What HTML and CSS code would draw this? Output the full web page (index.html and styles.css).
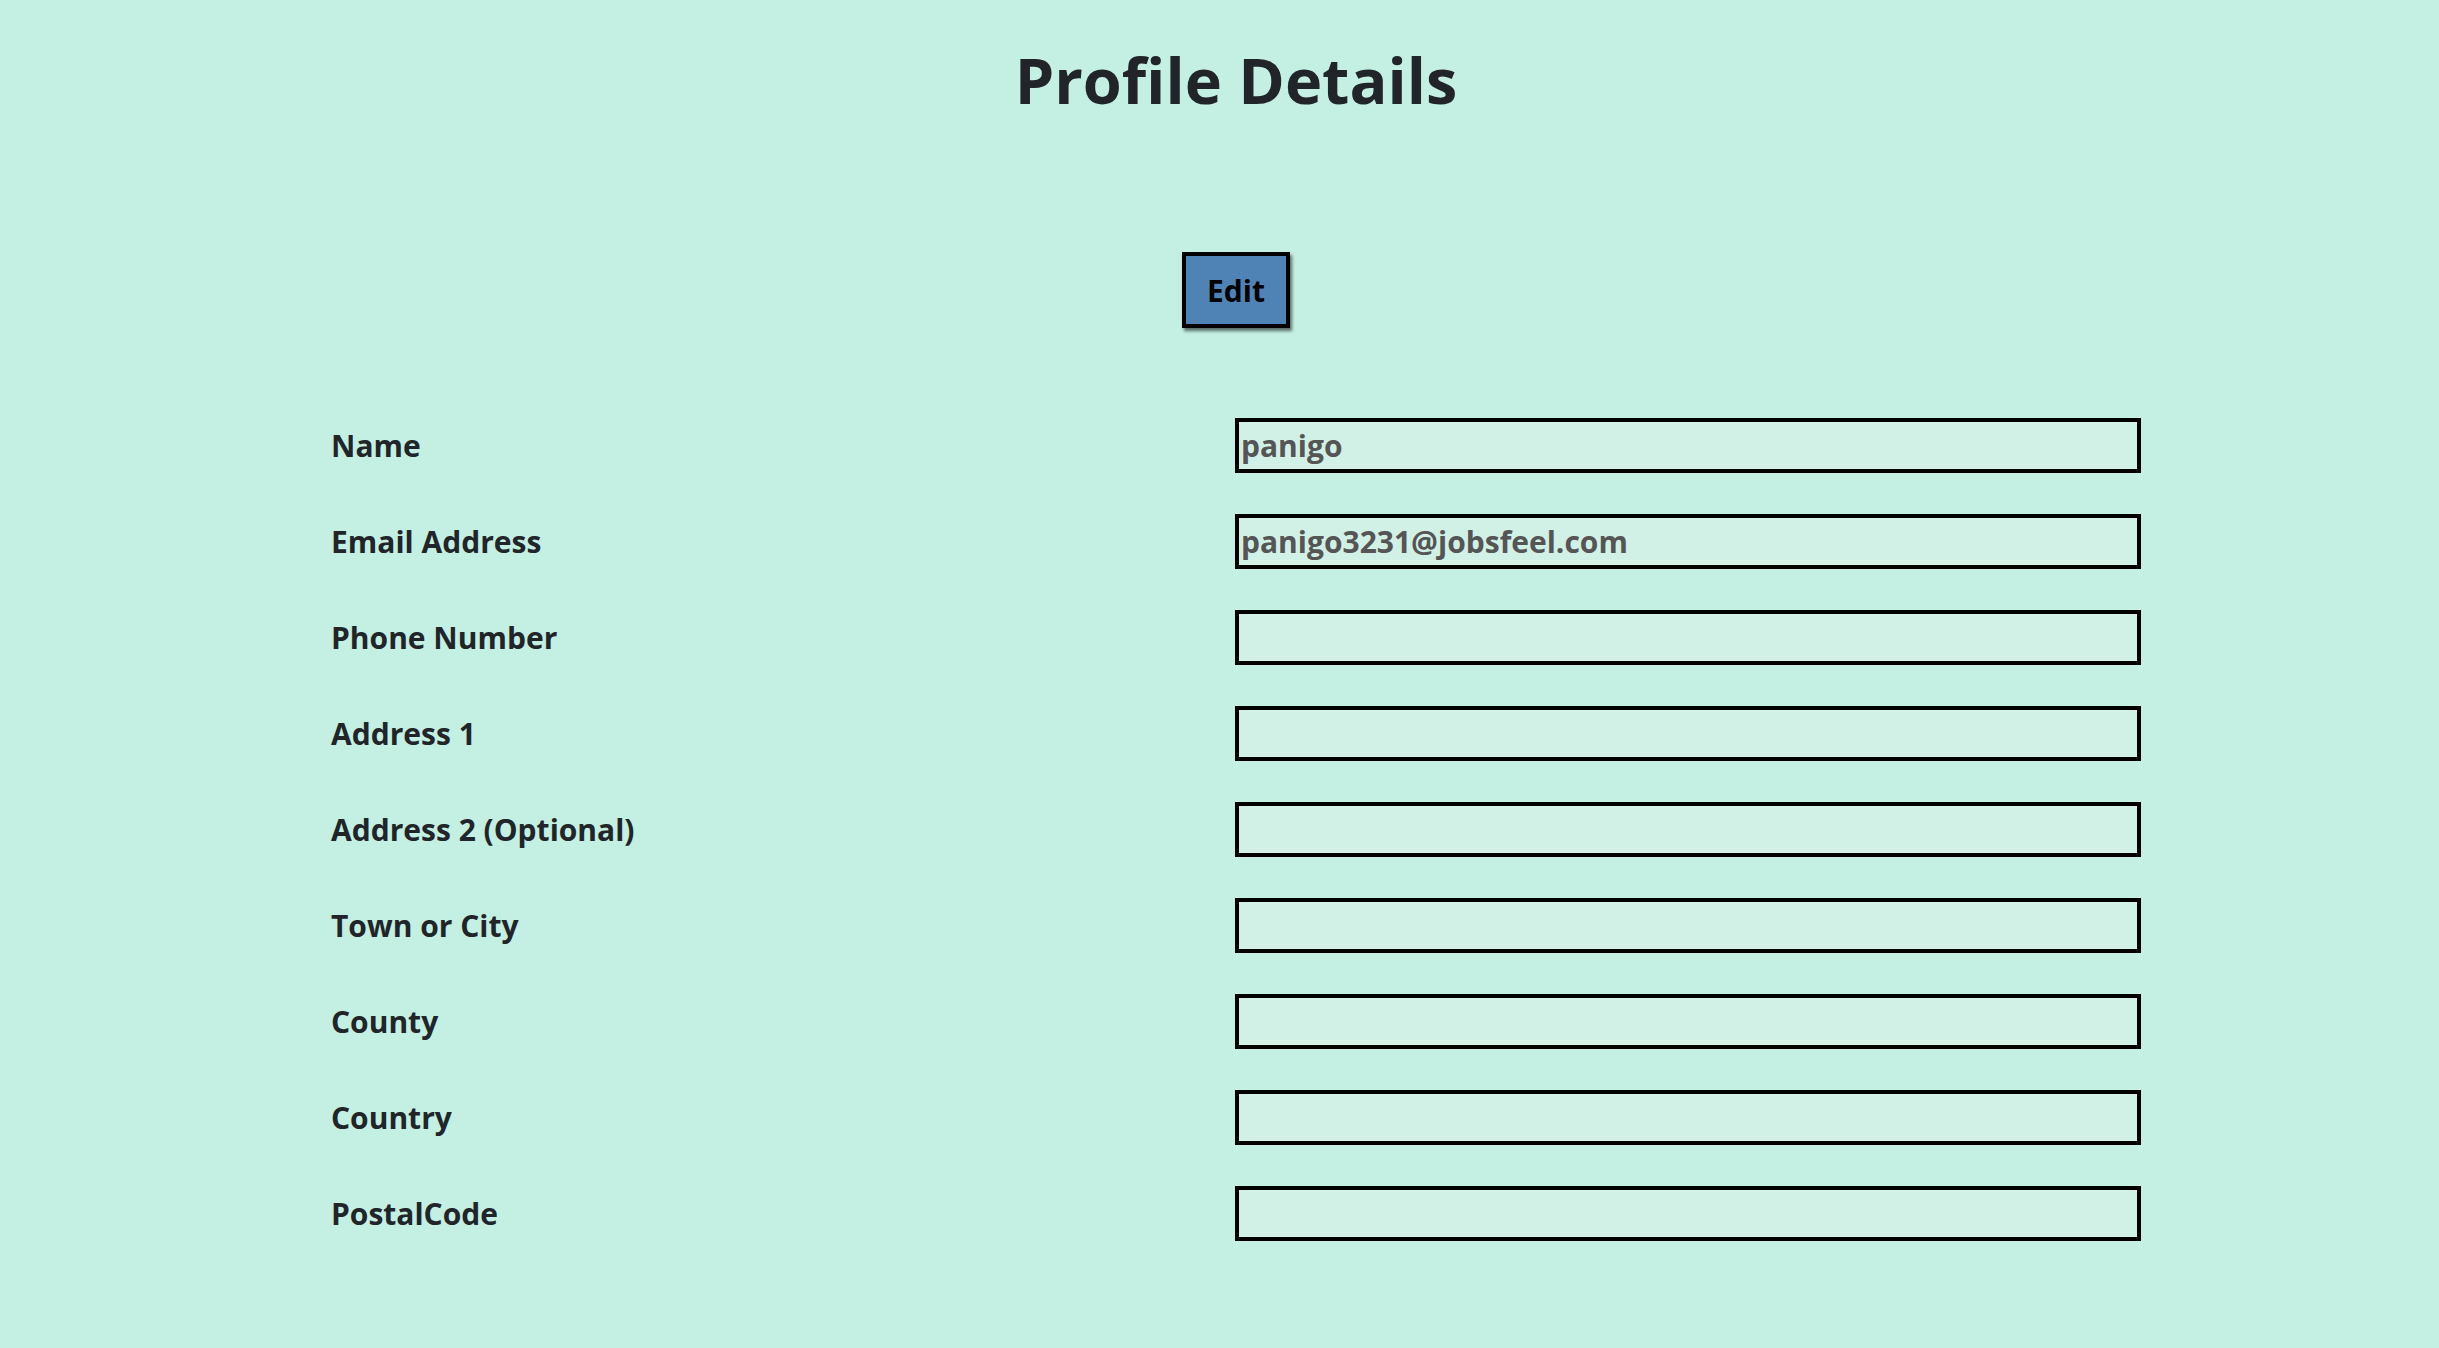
FILE: index.html
```html
<!DOCTYPE html>
<html lang="en">
<head>
<meta charset="utf-8">
<title>Profile Details</title>
<link rel="stylesheet" href="styles.css">
</head>
<body>
<main class="page">
  <h1 class="title">Profile Details</h1>
  <div class="actions">
    <button class="edit-btn" type="button">Edit</button>
  </div>
  <form class="form">
    <label class="label" for="name">Name</label>
    <input class="field" id="name" type="text" value="panigo" readonly>
    <label class="label" for="email">Email Address</label>
    <input class="field" id="email" type="text" value="panigo3231@jobsfeel.com" readonly>
    <label class="label" for="phone">Phone Number</label>
    <input class="field" id="phone" type="text" readonly>
    <label class="label" for="addr1">Address 1</label>
    <input class="field" id="addr1" type="text" readonly>
    <label class="label" for="addr2">Address 2 (Optional)</label>
    <input class="field" id="addr2" type="text" readonly>
    <label class="label" for="town">Town or City</label>
    <input class="field" id="town" type="text" readonly>
    <label class="label" for="county">County</label>
    <input class="field" id="county" type="text" readonly>
    <label class="label" for="country">Country</label>
    <input class="field" id="country" type="text" readonly>
    <label class="label" for="postal">PostalCode</label>
    <input class="field" id="postal" type="text" readonly>
  </form>
</main>
</body>
</html>
```
FILE: styles.css
```css
html, body {
  margin: 0;
  padding: 0;
  background: #c3f0e2;
}
body {
  font-family: "Open Sans", "Lato", sans-serif;
  color: #212529;
  min-height: 1348px;
}
.page {
  width: 1810px;
  margin-left: 331px;
  padding-top: 37px;
}
.title {
  margin: 0;
  text-align: center;
  font-size: 63px;
  line-height: 86px;
  font-weight: 700;
  color: #212529;
}
.actions {
  display: flex;
  justify-content: center;
  margin-top: 129px;
}
.edit-btn {
  width: 108px;
  height: 76px;
  border: 4px solid #000;
  background: #4f83b6;
  color: #000;
  font-family: "Open Sans", "Lato", sans-serif;
  font-weight: 700;
  font-size: 30px;
  padding: 0;
  box-shadow: 2px 3px 3px rgba(0, 0, 0, 0.55);
  cursor: pointer;
}
.form {
  display: grid;
  grid-template-columns: 904px 906px;
  row-gap: 41px;
  margin-top: 90px;
  align-items: center;
}
.label {
  font-size: 30px;
  font-weight: 700;
  color: #212529;
}
.field {
  box-sizing: border-box;
  width: 906px;
  height: 55px;
  border: 4px solid #000;
  background: #d1f1e6;
  font-family: "Open Sans", "Lato", sans-serif;
  font-size: 30px;
  font-weight: 700;
  color: #555;
  padding: 0 2px;
  margin: 0;
  outline: none;
}
```
